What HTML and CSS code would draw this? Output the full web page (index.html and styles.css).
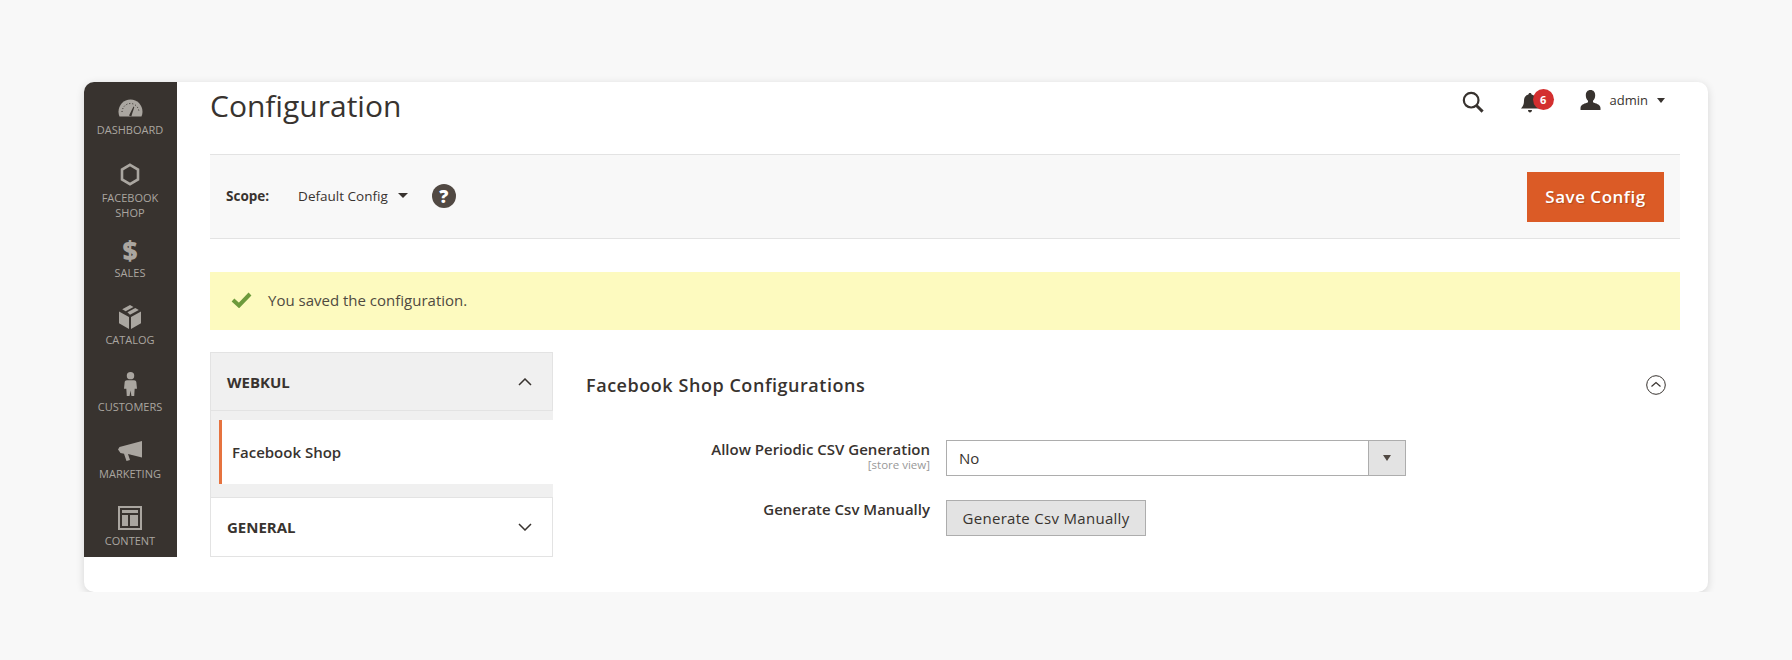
FILE: index.html
```html
<!doctype html>
<html lang="en-us">
  <head>
    <meta charset="utf-8">
    <title>Configuration</title>
    <link rel="stylesheet" href="styles.css">
  </head>
  <body>
    <div class="card">
      <nav class="sidebar">
        <a class="menu-item">
          <span class="menu-icon">
            <svg class="gauge" width="25" height="18" viewBox="0 0 25 18"><path fill="#aaa6a0" d="M12.500.5C5.800.5.500 6 .500 12.700c0 1.800.4 3.400 1 4.800h22c.6-1.400 1-3 1-4.800C24.500 6 19.200.5 12.500.5z"/><path fill="#38332f" d="M11 16.500l4.500-9 .8.4-3 9.600z"/><path stroke="#38332f" stroke-dasharray="1 2" fill="none" d="M4 13c.3-5 4-8.500 8.500-8.500S20.700 8 21 13"/></svg>
          </span>
          <span class="menu-label">Dashboard</span>
        </a>
        <a class="menu-item menu-item-double">
          <span class="menu-icon">
            <svg width="20" height="23" viewBox="0 0 20 23"><path fill="none" stroke="#aaa6a0" stroke-width="2.600" d="M10 1.800l8 4.800v9.800L10 21.200l-8-4.800V6.600z"/></svg>
          </span>
          <span class="menu-label">Facebook Shop</span>
        </a>
        <a class="menu-item">
          <span class="menu-icon dollar">$</span>
          <span class="menu-label">Sales</span>
        </a>
        <a class="menu-item">
          <span class="menu-icon">
            <svg width="22" height="24" viewBox="0 0 22 24"><path fill="#aaa6a0" d="M11 0l3.500 1.900-7.800 4.400L3.200 4.300zM16.300 2.900L19.800 4.900 11 9.700 8.400 7.300zM0 6.600l10 5.500V24L0 18.300zM22 6.600v11.700L12 24V12.100z"/></svg>
          </span>
          <span class="menu-label">Catalog</span>
        </a>
        <a class="menu-item">
          <span class="menu-icon">
            <svg width="13" height="26" viewBox="0 0 14 26"><circle cx="7" cy="4" r="4" fill="#aaa6a0"/><path fill="#aaa6a0" d="M3 9h8c1.200 0 2 .8 2.300 2l.7 7h-2.500l-.5 8H8l-1-6-1 6H3l-.5-8H0l.7-7C1 9.800 1.800 9 3 9z"/></svg>
          </span>
          <span class="menu-label">Customers</span>
        </a>
        <a class="menu-item">
          <span class="menu-icon">
            <svg width="24" height="20" viewBox="0 0 24 20"><path fill="#aaa6a0" d="M24 0v16.500L12 13.500 10 13l2 6-3.500 1-2.500-7.300L2.500 12 0 8.500 1.500 6z"/></svg>
          </span>
          <span class="menu-label">Marketing</span>
        </a>
        <a class="menu-item">
          <span class="menu-icon">
            <svg width="24" height="24" viewBox="0 0 24 24"><path fill="#aaa6a0" fill-rule="evenodd" d="M0 0h24v24H0zM2 2v20h20V2zM4 4h16v3H4zM4 9h6v11H4zM12 9h8v11h-8z"/></svg>
          </span>
          <span class="menu-label">Content</span>
        </a>
      </nav>

      <main class="content">
        <header class="page-header">
          <h1 class="page-title">Configuration</h1>
          <div class="actions">
            <svg class="search-icon" width="22" height="22" viewBox="0 0 24 24"><circle cx="10" cy="10" r="8" fill="none" stroke="#38332f" stroke-width="2.400"/><path d="M15.500 15.500l7 7" stroke="#38332f" stroke-width="3.200" fill="none"/></svg>
            <div class="notifications">
              <svg width="18" height="20" viewBox="0 0 18 20"><path fill="#38332f" d="M9 0c1 0 1.500.6 1.600 1.500C13.500 2.200 15 4.500 15 7.500c0 4 .8 5.500 3 8H0c2.200-2.500 3-4 3-8 0-3 1.500-5.300 4.400-6C7.500.6 8 0 9 0zM7 17h4c0 1.200-.9 2.500-2 2.500S7 18.200 7 17z"/></svg>
              <span class="badge">6</span>
            </div>
            <div class="user">
              <svg width="21" height="20" viewBox="0 0 21 20"><path fill="#38332f" d="M10.500 0c3 0 4.700 2.200 4.700 5.200 0 2.300-.9 4.500-2.200 5.600v1.500c2.500 1.200 7.500 2 7.500 5.700v2H.500v-2c0-3.700 5-4.500 7.500-5.700v-1.500C6.700 9.700 5.800 7.500 5.800 5.200 5.800 2.200 7.500 0 10.500 0z"/></svg>
              <span class="user-name">admin</span>
              <span class="caret caret-small"></span>
            </div>
          </div>
        </header>

        <div class="scope-bar">
          <div class="scope">
            <span class="scope-label">Scope:</span>
            <span class="scope-value">Default Config</span>
            <span class="caret"></span>
            <span class="help">?</span>
          </div>
          <button class="save-btn">Save Config</button>
        </div>

        <div class="message">
          <svg width="21" height="16" viewBox="0 0 21 16"><path fill="none" stroke="#6d9a3c" stroke-width="4" d="M2 8l6 5.500L19 2"/></svg>
          <span>You saved the configuration.</span>
        </div>

        <div class="columns">
          <aside class="tabs">
            <div class="tab-head tab-head-open">
              <span>WEBKUL</span>
              <svg width="14" height="8" viewBox="0 0 14 8"><path fill="none" stroke="#38332f" stroke-width="1.500" d="M1 7l6-6 6 6"/></svg>
            </div>
            <div class="tab-items">
              <div class="tab-item">Facebook Shop</div>
            </div>
            <div class="tab-head">
              <span>GENERAL</span>
              <svg width="14" height="8" viewBox="0 0 14 8"><path fill="none" stroke="#38332f" stroke-width="1.500" d="M1 1l6 6 6-6"/></svg>
            </div>
          </aside>

          <section class="section">
            <div class="section-head">
              <h2 class="section-title">Facebook Shop Configurations</h2>
              <svg width="20" height="20" viewBox="0 0 20 20"><circle cx="10" cy="10" r="9.300" fill="none" stroke="#38332f"/><path fill="none" stroke="#38332f" stroke-width="1.200" d="M5.500 11.500L10 7.500l4.500 4"/></svg>
            </div>
            <div class="form-row">
              <div class="form-label">
                <span class="label-text">Allow Periodic CSV Generation</span>
                <span class="label-scope">[store view]</span>
              </div>
              <div class="select">
                <span class="select-value">No</span>
                <span class="select-arrow"><span class="caret caret-arrow"></span></span>
              </div>
            </div>
            <div class="form-row">
              <div class="form-label">
                <span class="label-text">Generate Csv Manually</span>
              </div>
              <button class="generate-btn">Generate Csv Manually</button>
            </div>
          </section>
        </div>
      </main>
    </div>
  </body>
</html>
```

FILE: styles.css
```css
* {
  box-sizing: border-box;
}

body {
  margin: 0;
  padding: 82px 84px 0;
  background-color: #f8f8f8;
  font-family: "Open Sans", sans-serif;
  color: #38332f;
}

.card {
  display: flex;
  align-items: flex-start;
  height: 510px;
  background-color: #fff;
  border-radius: 10px;
  overflow: hidden;
  box-shadow: 0 2px 8px rgba(0, 0, 0, 0.14);
}

/* left admin menu */
.sidebar {
  width: 93px;
  height: 475px;
  padding-top: 9.5px;
  flex-shrink: 0;
  background-color: #38332f;
}

.menu-item {
  display: flex;
  flex-direction: column;
  align-items: center;
  padding: 0 1px 22px 0;
}

.menu-item:first-child {
  padding-bottom: 23px;
}

.menu-item-double {
  padding-bottom: 15px;
}

.menu-icon {
  display: flex;
  align-items: center;
  justify-content: center;
  height: 30px;
}

.gauge {
  margin-top: 2px;
}

.dollar {
  font-size: 26px;
  font-weight: 800;
  line-height: 28px;
  color: #aaa6a0;
}

.menu-label {
  width: 80px;
  font-size: 11px;
  line-height: 15px;
  text-align: center;
  text-transform: uppercase;
  color: #aaa6a0;
}

.content {
  flex: 1;
  padding: 0 28px 0 33px;
}

/* title row */
.page-header {
  display: flex;
  justify-content: space-between;
  height: 72px;
}

.page-title {
  margin: 0;
  padding-top: 3px;
  font-size: 30px;
  font-weight: 400;
  line-height: 41px;
}

.actions {
  display: flex;
  align-items: flex-start;
  padding: 8px 15px 0 0;
}

.search-icon {
  margin: 1px 37px 0 0;
}

.notifications {
  display: flex;
  position: relative;
  margin: 3px 41px 0 0;
}

.badge {
  position: absolute;
  top: -4px;
  left: 12px;
  width: 21px;
  height: 21px;
  border-radius: 50%;
  background-color: #d32f2f;
  color: #fff;
  font-size: 11px;
  font-weight: 700;
  line-height: 21px;
  text-align: center;
}

.user {
  display: flex;
  align-items: center;
  height: 20px;
}

.user-name {
  margin: 0 9px;
  font-size: 13px;
}

.caret {
  width: 0;
  height: 0;
  border-left: 5px solid transparent;
  border-right: 5px solid transparent;
  border-top: 5px solid #38332f;
}

.caret-small {
  border-left-width: 4px;
  border-right-width: 4px;
}

/* scope bar */
.scope-bar {
  display: flex;
  align-items: center;
  justify-content: space-between;
  height: 85px;
  padding: 0 16px;
  background-color: #f8f8f8;
  border-top: 1px solid #e3e3e3;
  border-bottom: 1px solid #e3e3e3;
}

.scope {
  display: flex;
  align-items: center;
  margin-top: -2px;
  font-size: 13.5px;
}

.scope-label {
  margin-right: 29px;
  font-weight: 700;
}

.scope-value {
  margin-right: 10px;
}

.help {
  width: 24px;
  height: 24px;
  margin-left: 24px;
  border-radius: 50%;
  background-color: #514943;
  color: #fff;
  font-size: 18px;
  font-weight: 800;
  line-height: 24px;
  text-align: center;
}

.save-btn {
  width: 137px;
  height: 50px;
  border: 0;
  padding: 0;
  background-color: #db5b26;
  color: #fff;
  font-family: inherit;
  font-size: 17px;
  font-weight: 600;
  letter-spacing: 0.5px;
  text-shadow: 1px 1px 1px rgba(0, 0, 0, 0.2);
}

.message {
  display: flex;
  align-items: center;
  gap: 16px;
  height: 58px;
  margin-top: 33px;
  padding: 0 0 2px 21px;
  background-color: #fdfabf;
  font-size: 15px;
  color: #4f4a3f;
}

.columns {
  display: flex;
  margin-top: 22px;
}

/* config tabs */
.tabs {
  width: 343px;
  flex-shrink: 0;
}

.tab-head {
  display: flex;
  align-items: center;
  justify-content: space-between;
  height: 60px;
  padding: 0 20px 0 16px;
  background-color: #fff;
  border: 1px solid #e3e3e3;
  font-size: 15px;
  font-weight: 700;
}

.tab-head-open {
  height: 59px;
  background-color: #f0f0f0;
}

.tab-items {
  padding: 9px 0 13px 8px;
  background-color: #f0f0f0;
  border-left: 1px solid #e3e3e3;
}

.tab-item {
  height: 64px;
  padding-left: 10px;
  margin-right: -1px;
  background-color: #fff;
  border-left: 3px solid #e6733f;
  font-size: 15px;
  font-weight: 600;
  line-height: 64px;
}

/* config form */
.section {
  flex: 1;
  padding-left: 33px;
}

.section-head {
  display: flex;
  align-items: center;
  justify-content: space-between;
  height: 66px;
  padding-right: 14px;
}

.section-title {
  margin: 0;
  font-size: 18px;
  font-weight: 600;
  letter-spacing: 0.55px;
}

.form-row {
  display: flex;
  align-items: flex-start;
  gap: 16px;
  margin-top: 22px;
  margin-bottom: -1px;
}

.form-row + .form-row {
  margin-top: 25px;
}

.form-label {
  display: flex;
  flex-direction: column;
  align-items: flex-end;
  width: 344px;
}

.label-text {
  font-size: 15px;
  font-weight: 600;
  line-height: 19px;
}

.label-scope {
  font-size: 11.5px;
  line-height: 12px;
  color: #999;
}

.select {
  display: flex;
  align-items: center;
  justify-content: space-between;
  width: 460px;
  height: 36px;
  background-color: #fff;
  border: 1px solid #adadad;
  font-size: 15px;
}

.select-value {
  padding-left: 12px;
}

.select-arrow {
  display: flex;
  align-items: center;
  justify-content: center;
  width: 37px;
  height: 100%;
  background-color: #e3e3e3;
  border-left: 1px solid #adadad;
}

.caret-arrow {
  border-left-width: 4.5px;
  border-right-width: 4.5px;
  border-top-width: 6px;
  border-top-color: #514943;
}

.generate-btn {
  width: 200px;
  height: 36px;
  padding: 0;
  background-color: #e3e3e3;
  border: 1px solid #adadad;
  font-family: inherit;
  font-size: 15px;
  font-weight: 400;
  letter-spacing: 0.3px;
  color: #38332f;
}
```
